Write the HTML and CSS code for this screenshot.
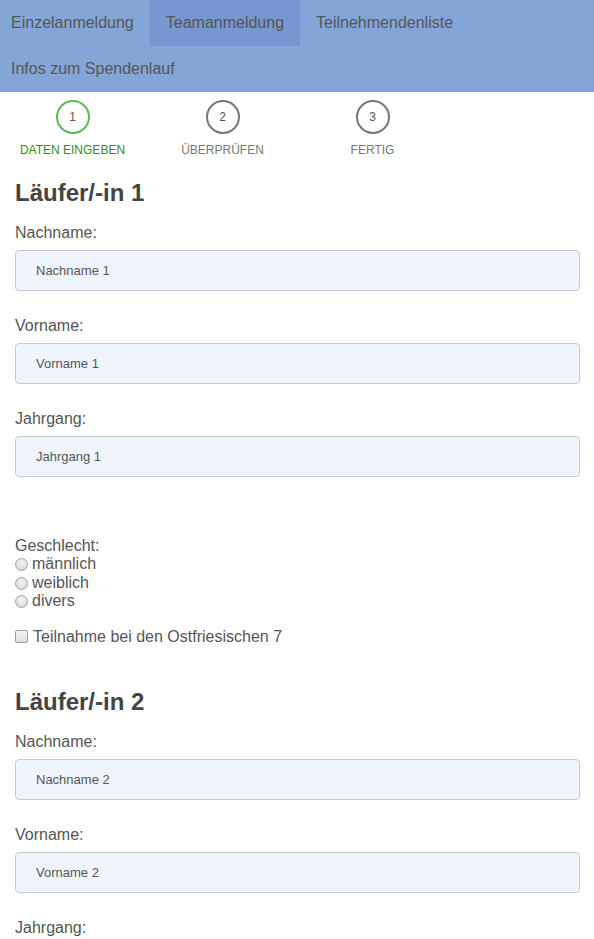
FILE: index.html
```html
<!DOCTYPE html>
<html lang="de">
<head>
<meta charset="utf-8">
<title>Teamanmeldung</title>
<link rel="stylesheet" href="styles.css">
</head>
<body>
<nav class="topnav">
  <ul class="nav-list">
    <li class="nav-item"><a href="#">Einzelanmeldung</a></li>
    <li class="nav-item active"><a href="#">Teamanmeldung</a></li>
    <li class="nav-item"><a href="#">Teilnehmendenliste</a></li>
    <li class="nav-item"><a href="#">Infos zum Spendenlauf</a></li>
  </ul>
</nav>

<ol class="steps">
  <li class="step current"><span class="step-num">1</span><span class="step-label">Daten eingeben</span></li>
  <li class="step"><span class="step-num">2</span><span class="step-label">Überprüfen</span></li>
  <li class="step"><span class="step-num">3</span><span class="step-label">Fertig</span></li>
</ol>

<main class="form">
  <section class="runner">
    <h2 class="runner-title">Läufer/-in 1</h2>
    <div class="field">
      <label class="field-label">Nachname:</label>
      <input class="field-input" type="text" placeholder="Nachname 1">
    </div>
    <div class="field">
      <label class="field-label">Vorname:</label>
      <input class="field-input" type="text" placeholder="Vorname 1">
    </div>
    <div class="field">
      <label class="field-label">Jahrgang:</label>
      <input class="field-input" type="text" placeholder="Jahrgang 1">
    </div>
    <div class="gender">
      <div class="gender-title">Geschlecht:</div>
      <label class="choice"><input class="radio" type="radio" name="g1">männlich</label>
      <label class="choice"><input class="radio" type="radio" name="g1">weiblich</label>
      <label class="choice"><input class="radio" type="radio" name="g1">divers</label>
    </div>
    <label class="choice check-line"><input class="checkbox" type="checkbox">Teilnahme bei den Ostfriesischen 7</label>
  </section>

  <section class="runner">
    <h2 class="runner-title">Läufer/-in 2</h2>
    <div class="field">
      <label class="field-label">Nachname:</label>
      <input class="field-input" type="text" placeholder="Nachname 2">
    </div>
    <div class="field">
      <label class="field-label">Vorname:</label>
      <input class="field-input" type="text" placeholder="Vorname 2">
    </div>
    <div class="field">
      <label class="field-label">Jahrgang:</label>
      <input class="field-input" type="text" placeholder="Jahrgang 2">
    </div>
  </section>
</main>
</body>
</html>
```
FILE: styles.css
```css
* { box-sizing: border-box; }

html, body {
  margin: 0;
  padding: 0;
  background: #fff;
}

body {
  font-family: "Liberation Sans", Arial, sans-serif;
  color: #555;
  font-size: 16px;
}

.topnav {
  background: #84a5d8;
  height: 92px;
  overflow: hidden;
}

.nav-list {
  list-style: none;
  margin: 0 0 0 -5px;
  padding: 0;
  display: flex;
  flex-wrap: wrap;
}

.nav-item a {
  display: block;
  height: 46px;
  line-height: 46px;
  padding: 0 16px;
  color: #555;
  text-decoration: none;
  font-size: 16px;
  white-space: nowrap;
}

.nav-item.active a {
  background: #7697d0;
}

.steps {
  list-style: none;
  margin: 0;
  padding: 8px 0 0 0;
  display: grid;
  grid-template-columns: repeat(3, 145px);
  column-gap: 5px;
}

.step {
  display: flex;
  flex-direction: column;
  align-items: center;
}

.step-num {
  width: 34px;
  height: 34px;
  border: 2px solid #777;
  border-radius: 50%;
  display: flex;
  align-items: center;
  justify-content: center;
  font-size: 12px;
  color: #555;
}

.step-label {
  margin-top: 9px;
  font-size: 12px;
  line-height: 14px;
  text-transform: uppercase;
  color: #777;
  white-space: nowrap;
}

.step.current .step-num {
  border-color: #5cb85c;
}

.step.current .step-label {
  color: #3c8a18;
}

.form {
  padding: 22px 14px 0 15px;
}

.runner + .runner {
  margin-top: 42px;
}

.runner-title {
  margin: 0 0 17px 0;
  font-size: 24px;
  line-height: 28px;
  font-weight: bold;
  color: #444;
}

.field {
  display: flex;
  flex-direction: column;
  margin-bottom: 26px;
}

.field-label {
  display: block;
  line-height: 18px;
  margin-bottom: 8px;
}

.field-input {
  display: block;
  width: 100%;
  height: 41px;
  border: 1px solid #c6c9ce;
  border-radius: 4px;
  background: #f0f5fd;
  padding: 0 20px;
  font-family: "Liberation Sans", Arial, sans-serif;
  font-size: 13px;
  color: #555;
  outline: none;
}

.field-input::placeholder {
  color: #555;
  opacity: 1;
}

.gender {
  margin-top: 60px;
  line-height: 18.4px;
}

.choice {
  display: flex;
  align-items: center;
  line-height: 18.4px;
}

.radio {
  -webkit-appearance: none;
  appearance: none;
  width: 13px;
  height: 13px;
  margin: 0 4px 0 0;
  border: 1px solid #a3a3a3;
  border-radius: 50%;
  background: radial-gradient(circle at 50% 35%, #f4f4f4 0%, #dcdcdc 70%, #cfcfcf 100%);
}

.check-line {
  margin-top: 17px;
}

.checkbox {
  -webkit-appearance: none;
  appearance: none;
  width: 13px;
  height: 13px;
  margin: 0 5px 0 0;
  border: 1px solid #9d9d9d;
  border-radius: 2px;
  background: linear-gradient(#f4f4f4, #dedede);
}
```
